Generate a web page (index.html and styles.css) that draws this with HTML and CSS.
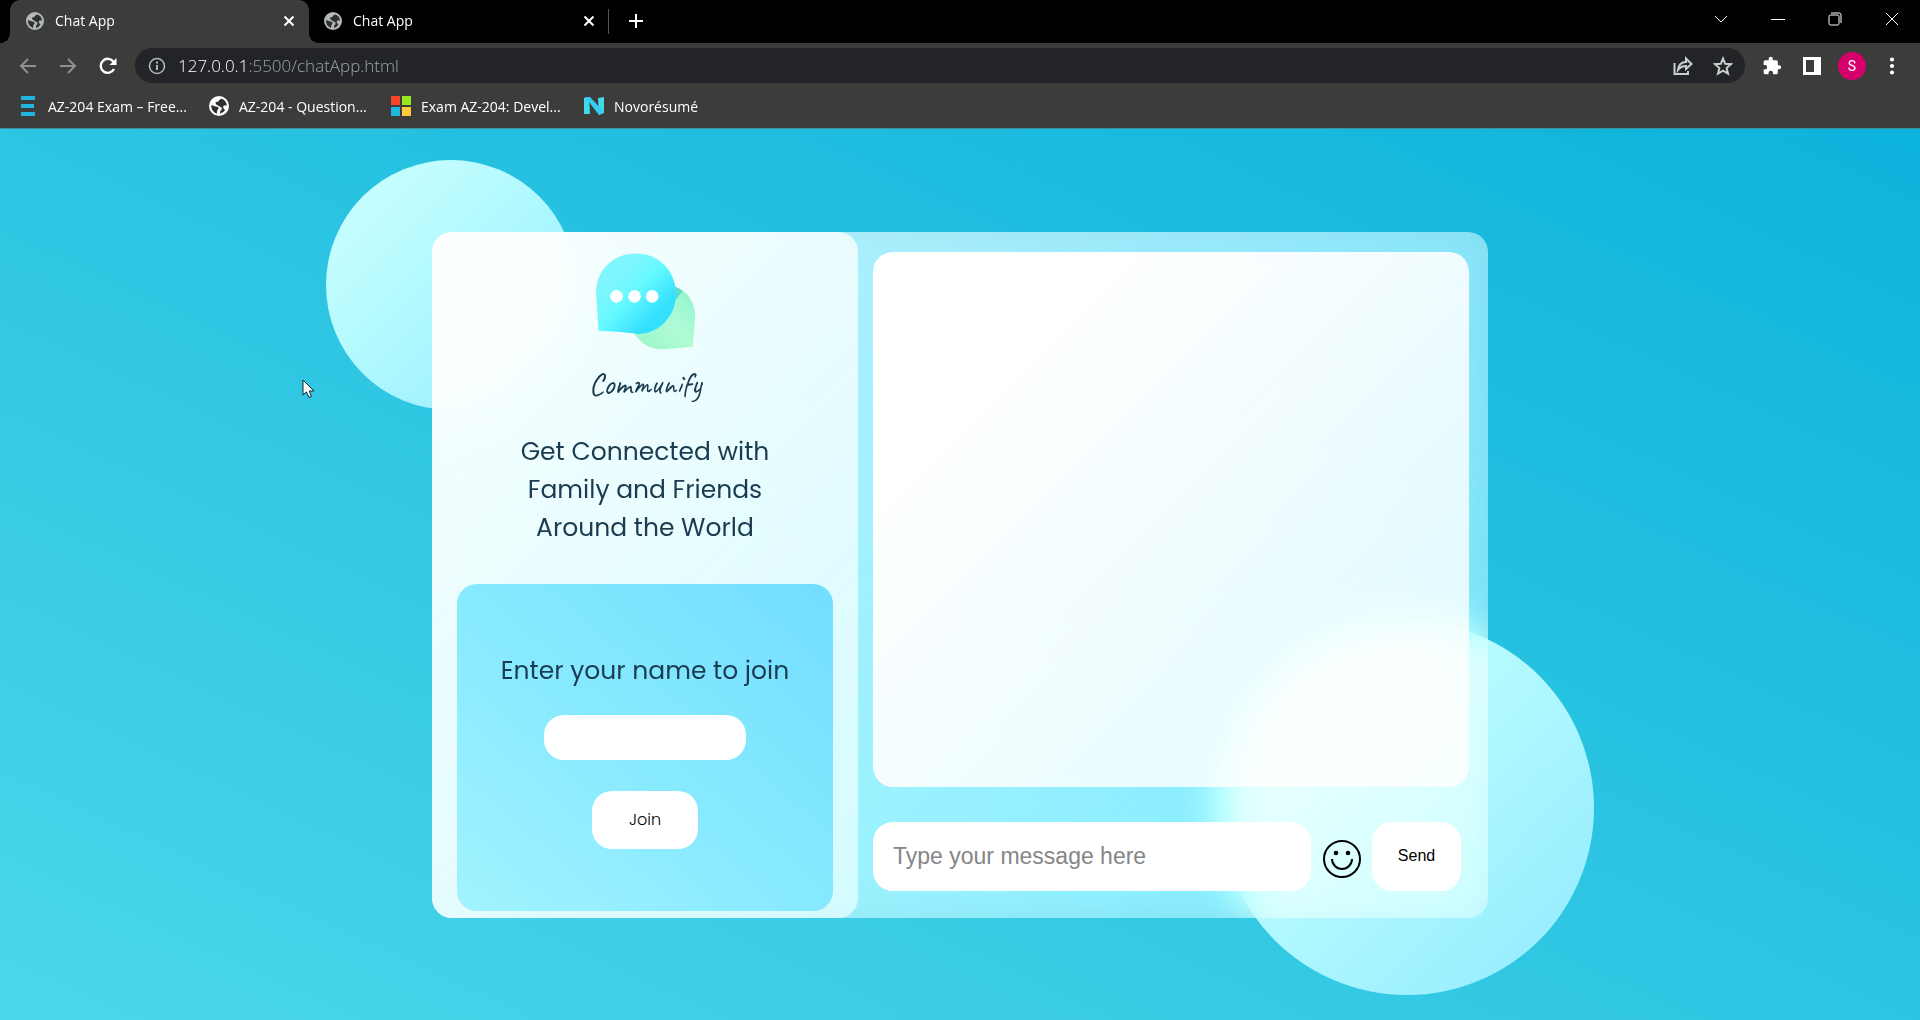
FILE: index.html
```html
<!DOCTYPE html>
<html lang="en">
<head>
<meta charset="utf-8">
<title>Chat App</title>
<link rel="stylesheet" href="styles.css">
</head>
<body>
<svg class="defs" aria-hidden="true">
  <symbol id="globe" viewBox="0 0 18 18">
    <circle cx="9" cy="9" r="9" fill="currentColor"/>
    <path class="land" d="M2 8 L6 9.500 Q9 9.500 8.500 11.500 Q7 12.500 7 16 Q2.500 14 2 9.500Z M11.500 2.500 Q15.500 4 16 8.500 L13.500 8.500 Q12 9.500 13 11 L14.500 12.500 Q13 15 10 16 L10 13.500 Q12 12.500 11.500 10.500 L8 8.500 Q5.500 7.500 6 5.500 Q8.500 5.500 9 4 Q10 2.500 11.500 2.500Z"/>
  </symbol>
  <symbol id="cross" viewBox="0 0 12 12"><path d="M1.500 1.500 L10.500 10.500 M10.500 1.500 L1.500 10.500" stroke="currentColor" stroke-width="2" fill="none"/></symbol>
</svg>

<header class="browser">
  <div class="tabs">
    <div class="tab tab-active">
      <svg class="favicon"><use href="#globe"/></svg>
      <span class="tab-title">Chat App</span>
      <button class="tab-close" aria-label="Close tab"><svg width="12" height="12"><use href="#cross"/></svg></button>
    </div>
    <div class="tab">
      <svg class="favicon"><use href="#globe"/></svg>
      <span class="tab-title">Chat App</span>
      <button class="tab-close" aria-label="Close tab"><svg width="12" height="12"><use href="#cross"/></svg></button>
    </div>
    <button class="new-tab" aria-label="New tab"><svg width="16" height="16" viewBox="0 0 16 16"><path d="M8 1V15M1 8H15" stroke="#fff" stroke-width="2"/></svg></button>
    <div class="window-controls">
      <button aria-label="Search tabs"><svg width="14" height="14" viewBox="0 0 14 14"><path d="M1 4 L7 10 L13 4"/></svg></button>
      <button aria-label="Minimize"><svg width="14" height="14" viewBox="0 0 14 14"><path d="M0 7.500H14"/></svg></button>
      <button aria-label="Restore"><svg width="14" height="14" viewBox="0 0 14 14"><rect x="1" y="3" width="10" height="10" rx="1.500"/><path d="M3 1H11Q13 1 13 3V11"/></svg></button>
      <button aria-label="Close window"><svg width="14" height="14" viewBox="0 0 14 14"><path d="M1 1 L13 13 M13 1 L1 13"/></svg></button>
    </div>
  </div>

  <div class="toolbar">
    <button class="tool dim" aria-label="Back"><svg width="18" height="18" viewBox="0 0 18 18"><path d="M17 9H2 M9 2 L2 9 L9 16"/></svg></button>
    <button class="tool dim" aria-label="Forward"><svg width="18" height="18" viewBox="0 0 18 18"><path d="M1 9H16 M9 2 L16 9 L9 16"/></svg></button>
    <button class="tool" aria-label="Reload"><svg width="18" height="18" viewBox="0 0 18 18"><path d="M15 12 A7 7 0 1 1 14.500 4.800" stroke-width="2.400"/><path d="M17.500 1V8H10.500Z" fill="#fff" stroke="none"/></svg></button>
    <div class="omnibox">
      <svg width="18" height="18" viewBox="0 0 18 18"><circle cx="9" cy="9" r="7.500" fill="none" stroke="#b0b4b8" stroke-width="1.600"/><path d="M9 8V13 M9 4.500V6.500" stroke="#b0b4b8" stroke-width="2"/></svg>
      <span class="url"><span class="host">127.0.0.1</span>:5500/chatApp.html</span>
      <button class="tool light" aria-label="Share"><svg width="20" height="20" viewBox="0 0 20 20"><path d="M1.500 7V18H15V15"/><path d="M5 14 Q6 6 13 6 V2.500 L18.500 8 L13 13 V10 Q8 10 5 14Z"/></svg></button>
      <button class="tool light" aria-label="Bookmark"><svg width="20" height="20" viewBox="0 0 20 20"><path d="M10 2.500 L12.200 7.800 L18 8.200 L13.600 12 L15 17.600 L10 14.600 L5 17.600 L6.400 12 L2 8.200 L7.800 7.800Z"/></svg></button>
    </div>
    <div class="actions">
      <button class="tool" aria-label="Extensions"><svg width="20" height="20" viewBox="0 0 24 24"><path fill="#fff" stroke="none" d="M20.500 11H19V7a2 2 0 0 0-2-2h-4V3.500a2.500 2.500 0 0 0-5 0V5H4a2 2 0 0 0-2 2v3.800h1.500a2.700 2.700 0 0 1 0 5.400H2V20a2 2 0 0 0 2 2h3.800v-1.500a2.700 2.700 0 0 1 5.400 0V22H17a2 2 0 0 0 2-2v-4h1.500a2.500 2.500 0 0 0 0-5z"/></svg></button>
      <button class="tool" aria-label="Side panel"><svg width="18" height="18" viewBox="0 0 18 18"><path fill="#fff" stroke="none" fill-rule="evenodd" d="M0 0H18V18H0Z M3 3V15H11V3Z"/></svg></button>
      <button class="avatar" aria-label="Profile">S</button>
      <button class="tool" aria-label="Menu"><svg width="18" height="18" viewBox="0 0 18 18"><g fill="#fff" stroke="none"><circle cx="9" cy="2.500" r="2.100"/><circle cx="9" cy="9" r="2.100"/><circle cx="9" cy="15.500" r="2.100"/></g></svg></button>
    </div>
  </div>

  <nav class="bookmarks" aria-label="Bookmarks">
    <a href="#"><svg width="20" height="20" viewBox="0 0 20 20"><path d="M3 2H17 M3 10H16 M3 18H17" stroke="#1fb6e0" stroke-width="4"/></svg>AZ-204 Exam – Free...</a>
    <a href="#"><svg width="20" height="20"><use href="#globe"/></svg>AZ-204 - Question...</a>
    <a href="#"><svg width="20" height="20" viewBox="0 0 20 20"><path fill="#f8452a" d="M0 0h9v9H0z"/><path fill="#9be81e" d="M11 0h9v9h-9z"/><path fill="#1fb6e0" d="M0 11h9v9H0z"/><path fill="#ffc93c" d="M11 11h9v9h-9z"/></svg>Exam AZ-204: Devel...</a>
    <a href="#"><svg width="20" height="20" viewBox="0 0 20 20"><path fill="#3fdbe8" d="M0 2 L5 1 L6 18 L0 18Z M14 2 L20 1 V17 L15 19Z"/><path fill="#35cdf5" d="M1 1 L6 1 L20 16 L15 19Z"/></svg>Novorésumé</a>
  </nav>
</header>

<main class="page">
  <div class="stage">
    <div class="circle circle-small"></div>
    <div class="circle circle-large"></div>
    <div class="panel">
      <section class="intro">
        <svg class="logo" viewBox="100 60 310 300" role="img" aria-label="Communify logo">
          <defs>
            <linearGradient id="blue" x1="0" y1="0" x2="1" y2="1"><stop offset="0.300" stop-color="#7df6ff"/><stop offset="0.500" stop-color="#62f8ff"/><stop offset="0.750" stop-color="#35e0ff"/></linearGradient>
            <linearGradient id="green" x1="0" y1="1" x2="1" y2="0"><stop offset="0" stop-color="#98f5c4"/><stop offset="0.500" stop-color="#b0fbd6"/><stop offset="0.750" stop-color="#a0f9d3"/><stop offset="1" stop-color="#8cf0cc"/></linearGradient>
          </defs>
          <path fill="url(#green)" d="M345 167 C385 180 410 225 403 270 L398 347 C370 350 340 354 310 355 C270 357 245 340 222 310Z"/>
          <path fill="#62dcc4" d="M345 167 Q358 172 367 180 L346 206Z"/>
          <path fill="url(#blue)" d="M114 300 L107 200 C100 120 155 67 227 67 C300 67 347 125 347 190 C347 255 295 312 230 309 C195 303 150 300 114 300Z"/>
          <g fill="#fff"><circle cx="168" cy="196" r="19"/><circle cx="222" cy="196" r="19"/><circle cx="275" cy="196" r="19"/></g>
        </svg>
        <h1 class="brand">Communify</h1>
        <p class="tagline">Get Connected with<br>Family and Friends<br>Around the World</p>
        <form class="join">
          <label for="name">Enter your name to join</label>
          <input id="name" type="text">
          <button type="button">Join</button>
        </form>
      </section>
      <section class="chat">
        <div class="messages"></div>
        <form class="composer">
          <input type="text" aria-label="Message" placeholder="Type your message here">
          <button class="emoji" type="button" aria-label="Emoji"><svg width="38" height="38" viewBox="0 0 38 38"><g fill="none" stroke="#000" stroke-width="2"><circle cx="19" cy="19" r="18"/><path d="M9 19 A10 10 0 0 0 29 19"/></g><circle cx="13" cy="13" r="2.300"/><circle cx="25" cy="13" r="2.300"/></svg></button>
          <button class="send" type="button">Send</button>
        </form>
      </section>
    </div>
  </div>
</main>
<svg class="cursor" width="13" height="20" viewBox="0 0 13 20" aria-hidden="true"><path d="M1 1 V16 L4.500 13 L7 18.500 L9.500 17.500 L7.200 12 H12Z" fill="#fff" stroke="#123" stroke-width="1"/></svg>
</body>
</html>
```
FILE: styles.css
```css
* { box-sizing: border-box; }

body {
  margin: 0;
  min-height: 100vh;
  display: flex;
  flex-direction: column;
  font-family: Poppins, Inter, sans-serif;
  background: #2cc3e1;
}

button { border: 0; padding: 0; background: none; cursor: pointer; }
input { border: 0; outline: 0; }
svg { display: block; flex: none; }
.defs { position: absolute; width: 0; height: 0; }
.land { fill: #30302f; }

/* Browser window */
.browser {
  background: #3c3c3a;
  color: #fff;
  font-family: "Segoe UI", "Open Sans", sans-serif;
  font-size: 14px;
  border-bottom: 1px solid #3f8f9d;
}
.tabs { display: flex; height: 43px; padding-left: 10px; background: #000; }
.tab {
  display: flex;
  align-items: center;
  width: 299px;
  padding: 0 13px 2px 15px;
}
.tab-active {
  position: relative;
  padding: 0 14px 2px 16px;
  border-radius: 10px 10px 0 0;
  background: #3c3c3a;
}
.tab-active::before, .tab-active::after {
  content: "";
  position: absolute;
  bottom: 0;
  width: 10px;
  height: 10px;
}
.tab-active::before { left: -10px; background: radial-gradient(circle at 0 0, transparent 10px, #3c3c3a 10px); }
.tab-active::after { right: -10px; background: radial-gradient(circle at 100% 0, transparent 10px, #3c3c3a 10px); }
.tab + .tab { width: 300px; border-right: 1px solid #555; height: 25px; margin-top: 9px; }
.favicon { width: 18px; height: 18px; margin-right: 11px; color: #b0b8bc; }
.tab-title { flex: 1; }
.tab-close { color: #fff; }
.new-tab { padding: 0 19px 2px; }
.window-controls { display: flex; margin-left: auto; height: 37px; }
.window-controls button { width: 57px; display: grid; place-items: center; }
.window-controls svg { fill: none; stroke: #fff; stroke-width: 1; }

.toolbar { display: flex; align-items: center; height: 45px; padding: 0 8px; }
.tool { width: 40px; height: 35px; display: grid; place-items: center; }
.tool svg { fill: none; stroke: #fff; stroke-width: 2; }
.dim svg { stroke: #8f9190; }
.light svg { stroke: #c8ceca; stroke-width: 2; }
.omnibox {
  flex: 1;
  display: flex;
  align-items: center;
  height: 35px;
  margin: 0 7px;
  padding: 0 2px 0 13px;
  border-radius: 18px;
  background: #222428;
}
.url { flex: 1; margin-left: 12px; font-size: 17px; font-weight: 300; color: #a0a4a8; }
.host { color: #fff; }
.actions { display: flex; align-items: center; }
.avatar {
  width: 28px;
  height: 28px;
  margin: 0 6px;
  border-radius: 50%;
  background: #d6006c;
  color: #fff;
  font: 14px Roboto, sans-serif;
}

.bookmarks {
  display: grid;
  grid-template-columns: 171px 162px 173px auto;
  gap: 20px;
  height: 40px;
  padding: 0 18px 4px;
  align-items: center;
}
.bookmarks a {
  display: flex;
  align-items: center;
  gap: 10px;
  color: #fff;
  text-decoration: none;
  white-space: nowrap;
}

/* Chat page */
.page {
  flex: 1;
  display: flex;
  justify-content: center;
  align-items: center;
  background: linear-gradient(to top right, #4bd7e9 0%, #23bfe0 65%, #0cb3dc 100%);
}
.stage { position: relative; width: 55%; }
.circle {
  position: absolute;
  border-radius: 50%;
  background: linear-gradient(135deg, #d0ffff, #b6fbff 40%, #90eaff);
}
.circle-small { width: 250px; height: 250px; left: -106px; top: -72px; }
.circle-large { width: 374px; height: 374px; right: -106px; bottom: -77px; }

.panel {
  position: relative;
  display: flex;
  min-height: 67vh;
  border-radius: 20px;
  background: linear-gradient(135deg, rgba(255, 255, 255, 0.7), rgba(250, 255, 255, 0.35));
  backdrop-filter: blur(20px) brightness(1.13);
}

.intro {
  display: flex;
  flex-direction: column;
  align-items: center;
  width: 426px;
  padding: 19px 25px 7px;
  border-radius: 20px;
  color: #1a3c50;
  text-align: center;
  background: linear-gradient(135deg, rgba(255, 255, 255, 0.9), rgba(236, 255, 255, 0.7));
}
.logo { width: 103px; height: 100px; }
.brand { margin: 13px 0 0; font: 400 31px/40px Caveat, Lato, sans-serif; }
.tagline { margin: 29px 0 37px; font-size: 25px; line-height: 38px; }

.join {
  flex: 1;
  display: flex;
  flex-direction: column;
  align-items: center;
  align-self: stretch;
  padding: 68px 20px 62px;
  border-radius: 20px;
  background: linear-gradient(to top right, #a2f3ff, #86e9ff 50%, #72deff);
}
.join label { font-size: 25px; line-height: 38px; }
.join input { width: 202px; height: 45px; margin: 25px 0 31px; padding: 0 20px; border-radius: 20px; font-size: 16px; background: #fff; }
.join button, .send {
  border-radius: 20px;
  background: #fff;
  color: #000;
  font: 300 16px Poppins, Inter, sans-serif;
}
.join button { width: 106px; height: 58px; }

.chat {
  flex: 1;
  display: flex;
  flex-direction: column;
  gap: 35px;
  padding: 20px 19px 27px 15px;
}
.messages {
  flex: 1;
  min-height: 535px;
  border-radius: 20px;
  background: linear-gradient(135deg, #ffffff 20%, rgba(255, 255, 255, 0.8) 75%);
}
.composer { display: flex; align-items: center; padding-right: 8px; }
.composer input {
  flex: 1;
  min-width: 0;
  height: 69px;
  padding: 0 20px;
  border-radius: 20px;
  background: #fff;
  font: 23px "Liberation Sans", Arial, sans-serif;
}
.composer input::placeholder { color: #868686; }
.emoji { margin: 6px 11px 0 12px; }
.send { width: 89px; height: 69px; font-family: "Liberation Sans", Arial, sans-serif; }

.cursor { position: absolute; left: 302px; top: 379px; }
```
